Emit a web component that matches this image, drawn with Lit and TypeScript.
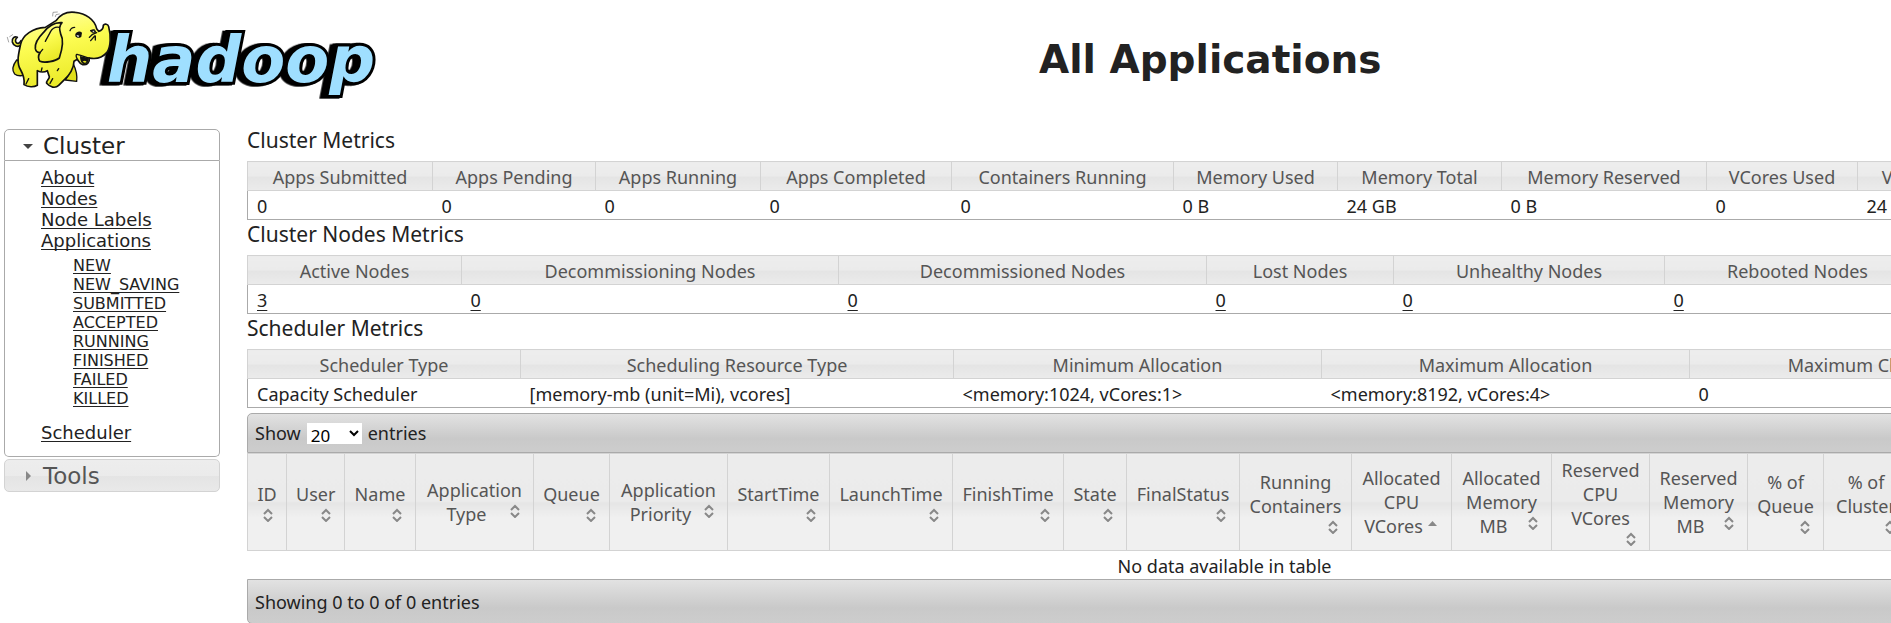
import { LitElement, html, css, svg, nothing } from "lit";
import { customElement, property, state } from "lit/decorators.js";

interface Column {
  label: string;
  width: number;
  sorted?: boolean;
  markBelow?: boolean;
}

interface Metrics {
  title: string;
  columns: Column[];
  values: string[];
  linked?: boolean;
}

const METRICS: Metrics[] = [
  {
    title: "Cluster Metrics",
    columns: [
      { label: "Apps Submitted", width: 185 },
      { label: "Apps Pending", width: 163 },
      { label: "Apps Running", width: 165 },
      { label: "Apps Completed", width: 191 },
      { label: "Containers Running", width: 222 },
      { label: "Memory Used", width: 164 },
      { label: "Memory Total", width: 164 },
      { label: "Memory Reserved", width: 205 },
      { label: "VCores Used", width: 151 },
      { label: "VCores Total", width: 153 },
      { label: "VCores Reserved", width: 191 },
    ],
    values: ["0", "0", "0", "0", "0", "0 B", "24 GB", "0 B", "0", "24", "0"],
  },
  {
    title: "Cluster Nodes Metrics",
    columns: [
      { label: "Active Nodes", width: 214 },
      { label: "Decommissioning Nodes", width: 377 },
      { label: "Decommissioned Nodes", width: 368 },
      { label: "Lost Nodes", width: 187 },
      { label: "Unhealthy Nodes", width: 271 },
      { label: "Rebooted Nodes", width: 266 },
      { label: "Shutdown Nodes", width: 271 },
    ],
    values: ["3", "0", "0", "0", "0", "0", "0"],
    linked: true,
  },
  {
    title: "Scheduler Metrics",
    columns: [
      { label: "Scheduler Type", width: 273 },
      { label: "Scheduling Resource Type", width: 433 },
      { label: "Minimum Allocation", width: 368 },
      { label: "Maximum Allocation", width: 368 },
      { label: "Maximum Cluster Application Priority", width: 512 },
    ],
    values: [
      "Capacity Scheduler",
      "[memory-mb (unit=Mi), vcores]",
      "<memory:1024, vCores:1>",
      "<memory:8192, vCores:4>",
      "0",
    ],
  },
];

const APP_COLUMNS: Column[] = [
  { label: "ID", width: 39 },
  { label: "User", width: 58 },
  { label: "Name", width: 71 },
  { label: "Application Type", width: 118 },
  { label: "Queue", width: 76 },
  { label: "Application Priority", width: 118 },
  { label: "StartTime", width: 102 },
  { label: "LaunchTime", width: 123 },
  { label: "FinishTime", width: 111 },
  { label: "State", width: 63 },
  { label: "FinalStatus", width: 113 },
  { label: "Running Containers", width: 112 },
  { label: "Allocated CPU VCores", width: 100, sorted: true },
  { label: "Allocated Memory MB", width: 100 },
  { label: "Reserved CPU VCores", width: 98, markBelow: true },
  { label: "Reserved Memory MB", width: 98 },
  { label: "% of Queue", width: 76 },
  { label: "% of Cluster", width: 85 },
  { label: "Progress", width: 94 },
  { label: "Tracking UI", width: 95 },
  { label: "Blacklisted Nodes", width: 104 },
];

const STATES = ["NEW", "NEW_SAVING", "SUBMITTED", "ACCEPTED", "RUNNING", "FINISHED", "FAILED", "KILLED"];

const colgroup = (columns: Column[]) =>
  html`<colgroup>${columns.map((c) => html`<col style="width:${c.width}px" />`)}</colgroup>`;

@customElement("hadoop-logo")
class HadoopLogo extends LitElement {
  static styles = css`
    :host { display: block; }
    .art { display: block; width: 390px; height: 110px; }
    .word { font: italic bold 192px "DejaVu Sans", Verdana, sans-serif; fill: #9fdfff; stroke: #000; stroke-width: 18;
      stroke-linejoin: miter; stroke-miterlimit: 3; paint-order: stroke; }
    .shade { filter: drop-shadow(-8px 0 0 #000) drop-shadow(-9px 2px 0 #000); }
    .hide { fill: url(#skin); stroke: #111; stroke-width: 5; stroke-linejoin: round; stroke-linecap: round; }
    .dark { fill: #e0df1c; stroke: #111; stroke-width: 4; stroke-linejoin: round; }
    .line { fill: none; stroke: #111; stroke-width: 4; stroke-linecap: round; stroke-linejoin: round; }
    .thin { fill: none; stroke: #777; stroke-width: 2; stroke-linecap: round; }
    .ink { fill: #111; }
    .white { fill: #fff; }
  `;
  render() {
    return html`<svg class="art" viewBox="0 0 1170 330" role="img" aria-label="hadoop">
      <defs>
        <linearGradient id="skin" x1="0.3" y1="0" x2="0.6" y2="1">
          <stop offset="0" stop-color="#ffffa0" />
          <stop offset="0.4" stop-color="#fcfc52" />
          <stop offset="1" stop-color="#e8e722" />
        </linearGradient>
      </defs>
      ${svg`
      <g class="shade"><text class="word" x="320" y="245">hadoop</text></g>
      <path class="thin" d="M158 48 L159 37 L172 36 M166 50 L168 44 L178 42 M22 112 L26 126 M29 110 L38 104" />
      <path class="dark" d="M50 180 C38 196 36 212 44 222 C54 230 70 228 80 222 L74 186 Z" />
      <path class="dark" d="M212 196 C214 214 202 232 196 240 L230 244 C232 226 228 208 220 192 Z" />
      <path class="hide" d="M62 136 C54 142 40 138 37 126 C35 114 44 108 52 112 C46 116 44 124 50 129 C55 132 60 128 63 122" />
      <path class="hide" d="M62 132 C68 106 98 84 136 82 L168 62 C182 42 204 34 226 37 C256 40 284 58 290 86 L296 94 C306 92 310 84 310 76 C314 70 324 72 326 80 C332 104 334 140 320 158 C308 172 288 178 268 174 C270 188 260 196 248 194 C240 192 236 184 232 178 L222 184 C222 204 208 226 194 238 L176 256 C166 266 150 262 140 250 C138 242 148 238 148 230 L142 212 C132 218 120 216 112 212 L112 256 C102 262 84 262 72 254 C74 238 70 224 62 210 C48 188 56 160 62 132 Z" />
      <path class="hide" d="M186 68 C158 66 142 82 130 98 C116 112 104 130 106 146 C108 156 114 158 120 158 C114 166 114 178 120 184 C134 190 166 184 178 174 C186 150 192 120 182 102 C178 90 176 78 186 68 Z" />
      <path class="line" d="M152 94 C158 84 168 80 178 82 M152 94 C146 106 140 116 136 124 M120 158 L128 148 M232 178 C226 168 228 160 234 164 M234 164 C246 166 258 172 268 174" />
      <path class="line" d="M210 92 C212 86 218 82 224 82 M272 92 L280 90 M268 112 C274 104 282 100 290 98 M272 122 L284 108 M286 120 L286 108" />
      <path class="ink" d="M226 102 C230 94 240 92 246 98 L244 110 C238 116 228 114 226 108 Z M270 92 L284 88 L290 98 L276 98 Z M240 168 L266 174 C268 186 260 192 250 192 C242 188 240 178 240 168 Z" />
      <path class="white" d="M229 105 L238 107 L234 112 Z M276 93 L283 92 L282 96 Z" />
      <path class="dark" d="M246 184 C252 178 260 180 262 186 C258 192 250 192 246 184 Z" />
      <path class="line" d="M124 212 L126 204 M172 212 L176 206 M78 252 L86 236 M150 250 L158 236" />
      `}
    </svg>`;
  }
}

@customElement("side-nav")
class SideNav extends LitElement {
  static styles = css`
    :host { display: block; font-family: "DejaVu Sans", Verdana, sans-serif; color: #222; }
    .tab {
      box-sizing: border-box; display: flex; align-items: center; width: 100%; gap: 8px;
      height: 32px; padding: 1px 0 0 16px; border: 1px solid #aaa; border-radius: 5px 5px 0 0;
      background: #fff; color: #222; font: 23px "DejaVu Sans", Verdana, sans-serif; text-align: left;
    }
    .arrow { width: 14px; height: 14px; flex: none; fill: #444; }
    .closed { margin-top: 2px; height: 33px; border-color: #d3d3d3; border-radius: 5px; color: #555;
      background: linear-gradient(#ededed 0, #ebebeb 50%, #e4e4e4 51%, #e9e9e9 100%); }
    .closed .arrow { fill: #888; }
    .panel { border: 1px solid #aaa; border-top: 0; border-radius: 0 0 5px 5px; padding: 6px 0 13px 36px; }
    ul { list-style: none; margin: 0; padding: 0; }
    .links { font-size: 18px; line-height: 21px; }
    .states { font-size: 16px; line-height: 19px; padding: 5px 0 14px 32px; }
    a { color: #222; text-decoration: underline; text-underline-offset: 2px; text-decoration-thickness: 1px; text-decoration-skip-ink: none; }
  `;
  render() {
    return html`<nav>
      <button class="tab" type="button" aria-expanded="true">
        <svg class="arrow" viewBox="0 0 14 14"><path d="M2 5h10L7 10z" /></svg>Cluster
      </button>
      <div class="panel">
        <ul class="links">
          <li><a href="#about">About</a></li>
          <li><a href="#nodes">Nodes</a></li>
          <li><a href="#labels">Node Labels</a></li>
          <li>
            <a href="#apps">Applications</a>
            <ul class="states">${STATES.map((s) => html`<li><a href="#${s}">${s}</a></li>`)}</ul>
          </li>
          <li><a href="#scheduler">Scheduler</a></li>
        </ul>
      </div>
      <button class="tab closed" type="button" aria-expanded="false">
        <svg class="arrow" viewBox="0 0 14 14"><path d="M5 2v10l5-5z" /></svg>Tools
      </button>
    </nav>`;
  }
}

const tableStyles = css`
  table { width: 100%; min-width: 1954px; table-layout: fixed; border-collapse: collapse; border: 1px solid #aaa; }
  th { font-weight: normal; color: #555; border: 1px solid #d3d3d3;
    background: linear-gradient(#ededed 0, #ebebeb 50%, #e4e4e4 51%, #ebebeb 100%); }
  th, td { padding: 3px 9px 1px; line-height: 24px; }
  td { text-align: left; }
  a { color: #222; text-underline-offset: 3px; text-decoration-thickness: 1px; }
`;

@customElement("metrics-table")
class MetricsTable extends LitElement {
  @property({ attribute: false }) metrics!: Metrics;
  static styles = [
    tableStyles,
    css`
      :host { display: block; }
      h2 { margin: 0; padding-bottom: 6px; font-size: 21px; line-height: 29px; font-weight: normal; }
    `,
  ];
  render() {
    const { title, columns, values, linked } = this.metrics;
    return html`<h2 id="title">${title}</h2>
      <table aria-labelledby="title">
        ${colgroup(columns)}
        <thead><tr>${columns.map((c) => html`<th scope="col">${c.label}</th>`)}</tr></thead>
        <tbody><tr>${values.map((v) => html`<td>${linked ? html`<a href="#nodes">${v}</a>` : v}</td>`)}</tr></tbody>
      </table>`;
  }
}

@customElement("apps-table")
class AppsTable extends LitElement {
  @state() private size = "20";
  static styles = [
    tableStyles,
    css`
      :host { display: block; min-width: 1954px; margin-top: 5px; }
      .bar { box-sizing: border-box; display: flex; align-items: center; gap: 6px; padding: 0 7px;
        border: 1px solid #aaa; background: linear-gradient(#e2e2e2, #c9c9c9 65%, #cdcdcd); }
      .top { height: 40px; border-radius: 5px 5px 0 0; }
      .bottom { height: 45px; border-radius: 0 0 5px 5px; }
      label { display: flex; align-items: center; gap: 6px; }
      select { width: 55px; height: 21px; border: 0; border-radius: 0; background: #fff; color: #000;
        font: 17px "Noto Sans", sans-serif; padding: 0; }
      table { border: 0; }
      th { padding: 4px 9px; height: 88px; background: linear-gradient(#ececec 0, #ebebeb 49%, #e5e5e5 50%, #f0f0f0 66%, #f0f0f0 100%); }
      .sort { display: block; width: 100%; margin: 0; padding: 0; border: 0; background: none;
        color: inherit; font: inherit; line-height: 24px; text-align: center; }
      .mark { float: right; width: 16px; height: 16px; fill: none; stroke: #888; stroke-width: 2; }
      .below .mark { float: none; display: block; margin-left: auto; }
      .up { fill: #888; stroke: none; }
      .empty { text-align: center; }
    `,
  ];
  private mark(sorted?: boolean) {
    return sorted
      ? html`<svg class="mark up" viewBox="0 0 16 16"><path d="M2 12h9L6.500 7z" /></svg>`
      : html`<svg class="mark" viewBox="0 0 16 16"><path d="M3 8L7 4L11 8M3 11L7 15L11 11" /></svg>`;
  }
  render() {
    return html`<div class="bar top">
        <label>Show
          <select .value=${this.size} @change=${(e: Event) => (this.size = (e.target as HTMLSelectElement).value)}>
            <option>20</option><option>40</option><option>60</option><option>80</option><option>100</option>
          </select>
          entries</label>
      </div>
      <table>
        ${colgroup(APP_COLUMNS)}
        <thead><tr>
          ${APP_COLUMNS.map((c) => html`<th scope="col" aria-sort=${c.sorted ? "ascending" : nothing}><button class="sort ${c.markBelow ? "below" : ""}" type="button">${c.label}${this.mark(c.sorted)}</button></th>`)}
        </tr></thead>
        <tbody><tr><td class="empty" colspan=${APP_COLUMNS.length}>No data available in table</td></tr></tbody>
      </table>
      <div class="bar bottom">Showing 0 to 0 of 0 entries</div>`;
  }
}

@customElement("app-root")
class AppRoot extends LitElement {
  static styles = css`
    :host { display: block; overflow: hidden; background: #fff; color: #222; font: 18px "Noto Sans", "Segoe UI", sans-serif; }
    .head { display: grid; grid-template-columns: 28% 1fr; align-items: center; min-height: 118px; }
    .logo { align-self: start; }
    h1 { margin: 0; text-align: center; font: bold 39px "DejaVu Sans", Verdana, sans-serif; }
    .body { display: grid; grid-template-columns: 216px minmax(0, 1fr); gap: 27px; padding: 8px 0 0 4px; }
    side-nav { padding-top: 3px; }
  `;
  render() {
    return html`<header class="head">
        <a class="logo" href="#home"><hadoop-logo></hadoop-logo></a>
        <h1>All Applications</h1>
      </header>
      <div class="body">
        <side-nav></side-nav>
        <main>
          ${METRICS.map((m) => html`<metrics-table .metrics=${m}></metrics-table>`)}
          <apps-table></apps-table>
        </main>
      </div>`;
  }
}
